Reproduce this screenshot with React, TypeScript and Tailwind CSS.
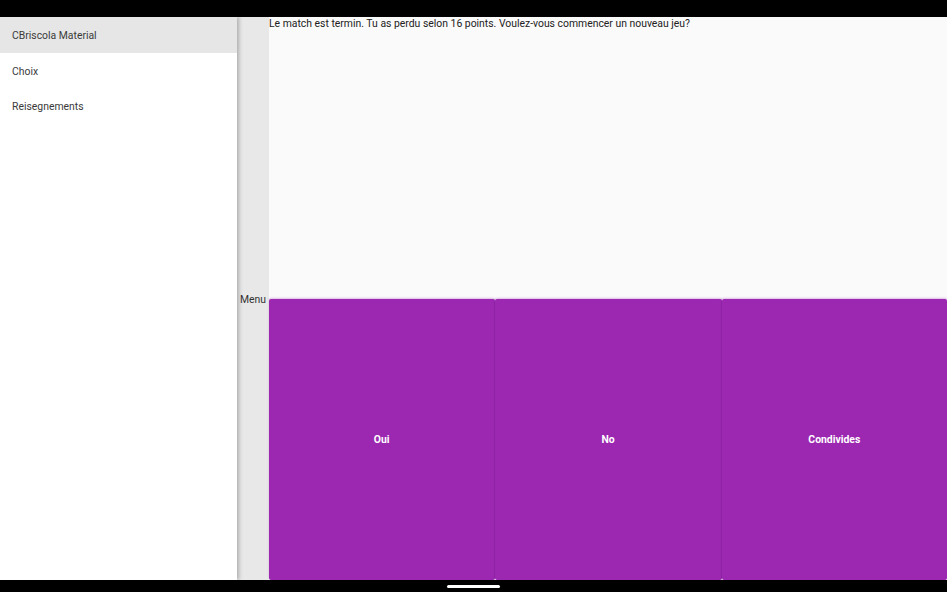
import React from "react";

export default function App() {
  return (
    <div className="w-[947px] h-[592px] flex flex-col bg-black overflow-hidden" style={{ fontFamily: "Roboto, 'Noto Sans', sans-serif" }}>
      <div className="h-[17px] bg-black shrink-0" />
      <div className="flex-1 flex min-h-0">
        <div className="w-[237px] bg-white flex flex-col shrink-0 relative z-10 shadow-[2px_0_4px_rgba(0,0,0,0.25)]">
          <div className="h-[36px] bg-[#e6e6e6] flex items-center px-[12px] pt-[2px] text-[10.4px] text-[#3a3a3a]">CBriscola Material</div>
          <div className="h-[36px] flex items-center px-[12px] pt-[1px] text-[10.4px] text-[#3a3a3a]">Choix</div>
          <div className="h-[36px] flex items-center px-[12px] text-[10.4px] text-[#3a3a3a]">Reisegnements</div>
        </div>
        <div className="w-[32px] bg-[#e8e8e8] flex items-center justify-center shrink-0">
          <span className="text-[10.4px] text-[#333] mt-[3px]">Menu</span>
        </div>
        <div className="flex-1 flex flex-col bg-[#fafafa]">
          <div className="h-[282px] text-[10.4px] text-[#222] leading-[12px] pt-[1px]">
            Le match est termin. Tu as perdu selon 16 points. Voulez-vous commencer un nouveau jeu?
          </div>
          <div className="flex-1 flex">
            <button className="flex-1 bg-[#9c27b0] text-white text-[10.4px] font-bold rounded-[2px] border-r border-[#8e24a4] shadow-[0_-1px_2px_rgba(156,39,176,0.3)]">Oui</button>
            <button className="flex-1 bg-[#9c27b0] text-white text-[10.4px] font-bold rounded-[2px] border-r border-[#8e24a4] shadow-[0_-1px_2px_rgba(156,39,176,0.3)]">No</button>
            <button className="flex-1 bg-[#9c27b0] text-white text-[10.4px] font-bold rounded-[2px] shadow-[0_-1px_2px_rgba(156,39,176,0.3)]">Condivides</button>
          </div>
        </div>
      </div>
      <div className="h-[12px] bg-black shrink-0 flex justify-center items-center">
        <div className="w-[53px] h-[3px] rounded-full bg-white" />
      </div>
    </div>
  );
}
